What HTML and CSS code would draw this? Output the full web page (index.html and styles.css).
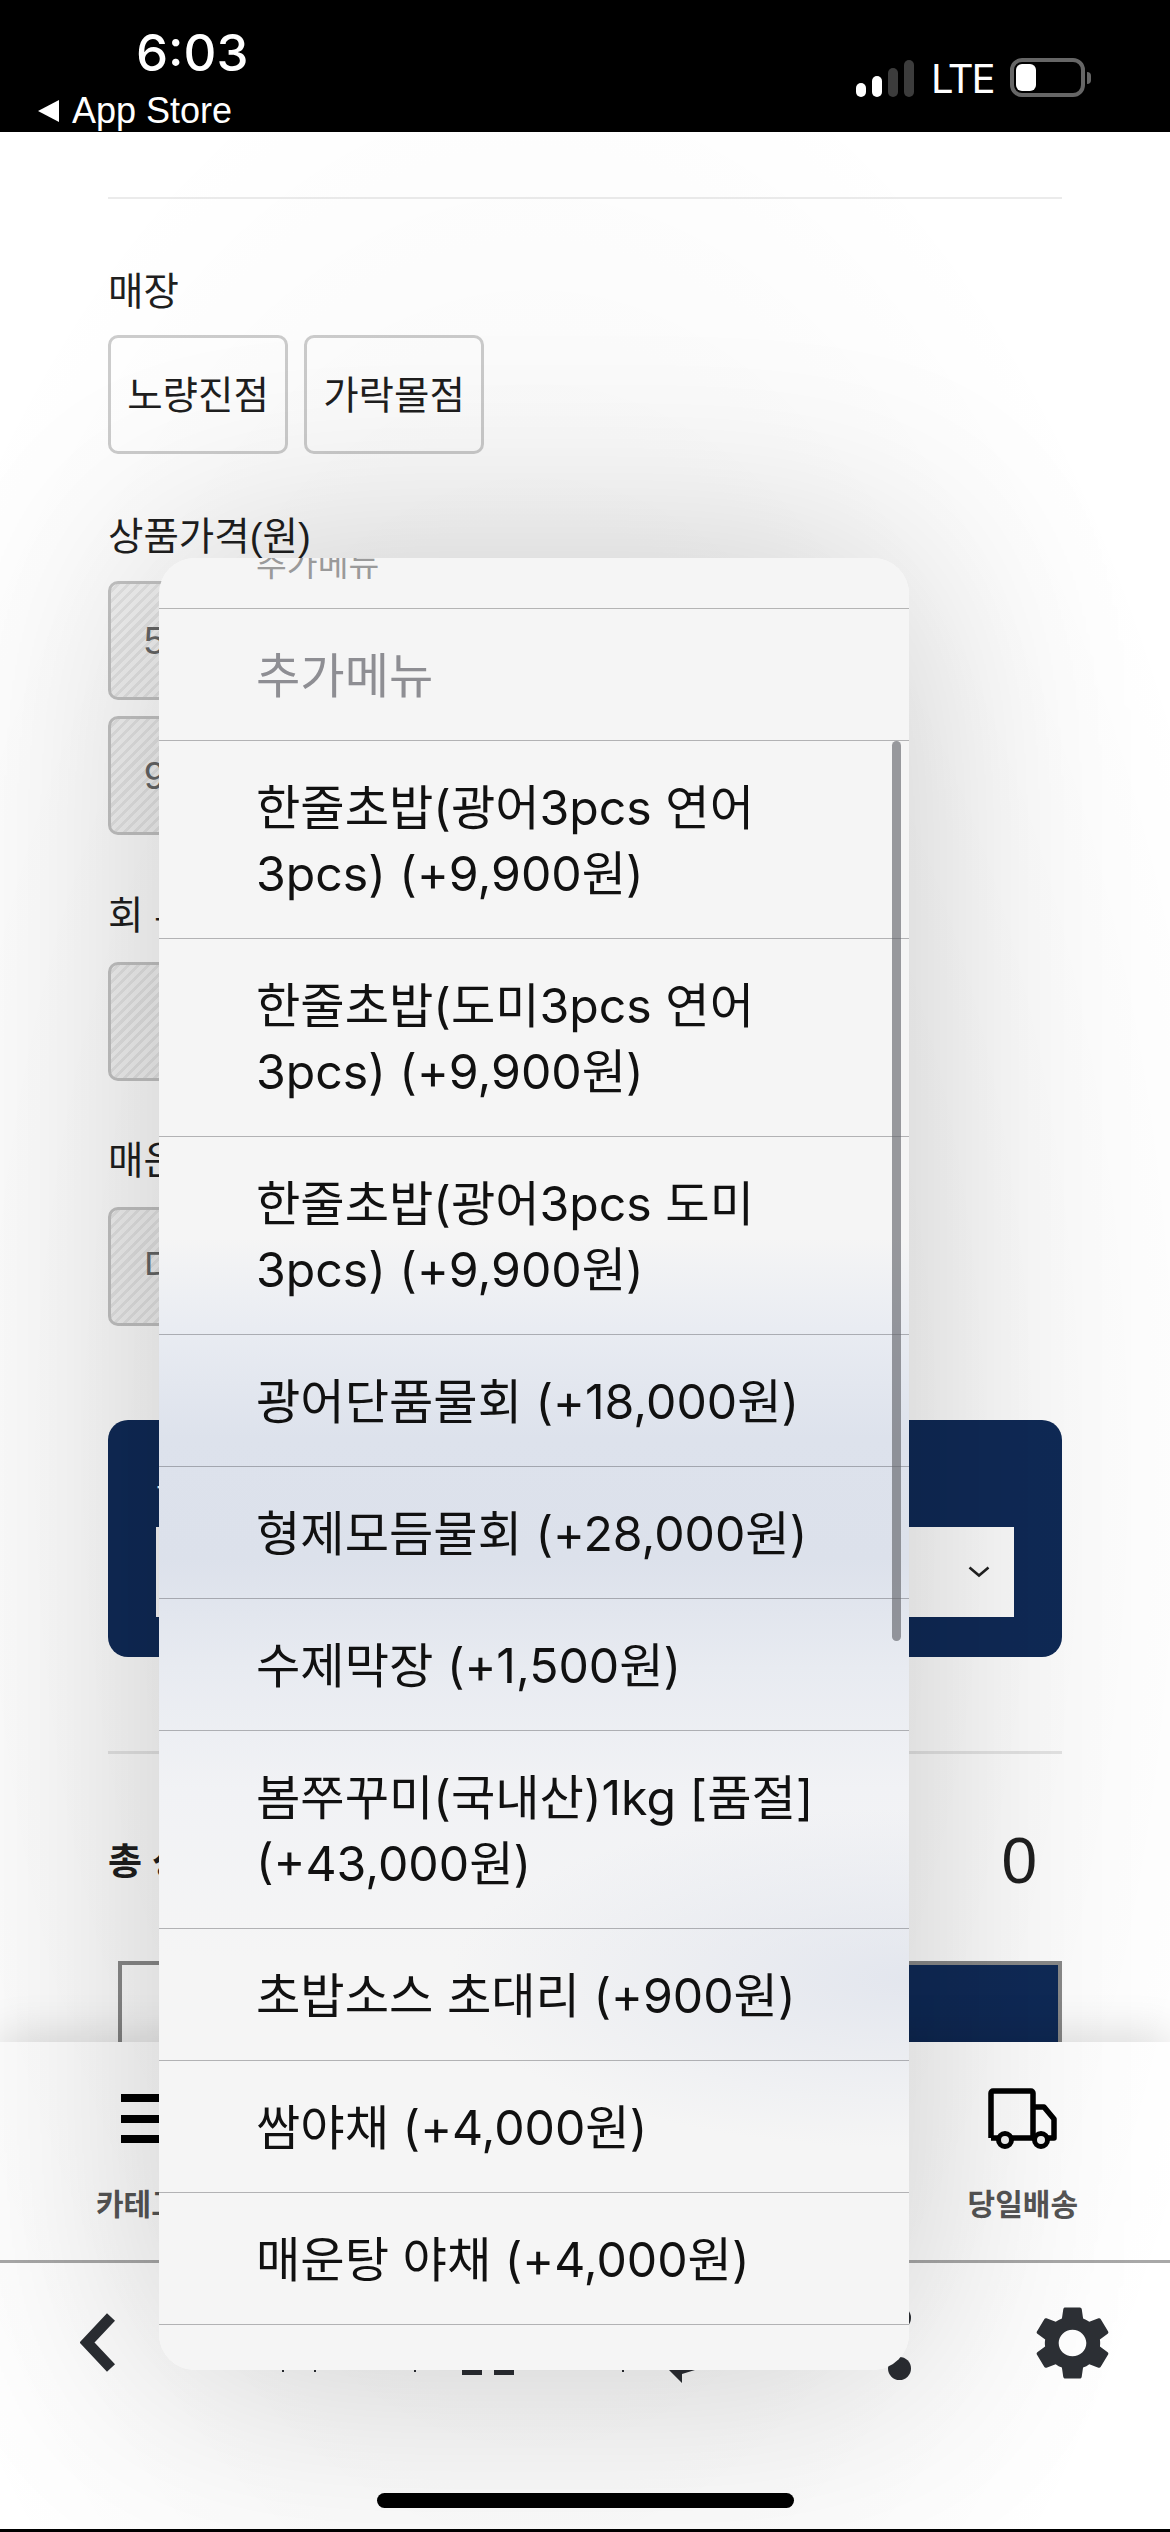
FILE: index.html
```html
<!DOCTYPE html>
<html lang="ko">
<head>
    <meta charset="UTF-8">
    <meta name="viewport" content="width=device-width, initial-scale=1.0">
    <title>상품 옵션</title>
    <link rel="stylesheet" href="styles.css">
</head>
<body>
<div class="screen">
    <!-- 상태바 -->
    <div class="status">
        <div class="status-left">
            <div class="time">6:03</div>
            <div class="back-app"><span class="back-tri"></span>App Store</div>
        </div>
        <div class="status-right">
            <div class="signal">
                <span class="bar b1"></span><span class="bar b2"></span><span class="bar b3"></span><span class="bar b4"></span>
            </div>
            <div class="lte">LTE</div>
            <div class="battery"><span class="battery-fill"></span></div>
            <span class="battery-nub"></span>
        </div>
    </div>

    <!-- 상품 옵션 -->
    <div class="content">
        <div class="rule"></div>
        <div class="label first">매장</div>
        <div class="chips">
            <div class="chip">노량진점</div>
            <div class="chip">가락몰점</div>
        </div>
        <div class="label price">상품가격(원)</div>
        <div class="box box-a">5</div>
        <div class="box box-b">9</div>
        <div class="label cut">회 부위</div>
        <div class="box box-c"></div>
        <div class="label spicy">매운맛</div>
        <div class="box box-c">대</div>
        <div class="card">
            <div class="card-label">추가메뉴</div>
            <div class="select">
                <svg class="chevron" viewBox="0 0 22 12"><path d="M1.5 1.5 11 9.5l9.5-8" fill="none" stroke="#222" stroke-width="2.6"/></svg>
            </div>
        </div>
        <div class="rule rule-total"></div>
        <div class="total">
            <span class="total-label">총 상품금액</span>
            <span class="total-num">0</span>
        </div>
        <div class="actions">
            <div class="btn-line"></div>
            <div class="btn-navy"></div>
        </div>
    </div>

    <!-- 하단 탭 -->
    <div class="tabs">
        <div class="tab">
            <div class="hamburger"><span></span><span></span><span></span></div>
            <div class="tab-name">카테고리</div>
        </div>
        <div class="tab">
            <svg class="truck" viewBox="0 0 70 62">
                <path d="M3 50V5a2 2 0 0 1 2-2h38a2 2 0 0 1 2 2v45M45 19h11l10 12v19h-6M3 50h7M24 50h22" fill="none" stroke="#000" stroke-width="5.5" stroke-linejoin="round"/>
                <circle cx="17" cy="52" r="6.5" fill="#f2f2f2" stroke="#000" stroke-width="5"/>
                <circle cx="53" cy="52" r="6.5" fill="#f2f2f2" stroke="#000" stroke-width="5"/>
            </svg>
            <div class="tab-name">당일배송</div>
        </div>
    </div>

    <!-- 브라우저 툴바 -->
    <div class="nav">
        <svg class="nav-back" viewBox="0 0 36 59"><path d="M31 4 7 29.5 31 55" fill="none" stroke="#2b2e33" stroke-width="11"/></svg>
        <svg class="nav-mid" viewBox="0 0 430 80">
            <rect x="11" y="64" width="2" height="2" fill="#2b2e33"/>
            <rect x="43" y="64" width="2" height="2" fill="#2b2e33"/>
            <rect x="143" y="64" width="2" height="2" fill="#2b2e33"/>
            <rect x="191" y="64" width="20" height="5" fill="#2b2e33"/>
            <rect x="223" y="64" width="20" height="5" fill="#2b2e33"/>
            <rect x="351" y="64" width="2" height="2" fill="#2b2e33"/>
            <path d="M398 64 411 77V68L424 64Z" fill="#2b2e33"/>
        </svg>
        <svg class="nav-more" viewBox="0 0 23 74">
            <circle cx="11.5" cy="12" r="11.5" fill="#2b2e33"/>
            <circle cx="11.5" cy="62.5" r="11.5" fill="#2b2e33"/>
        </svg>
        <svg class="nav-gear" viewBox="2.5 2 19 20" preserveAspectRatio="none"><path fill="#2d3035" d="M19.14 12.94c.04-.3.06-.61.06-.94 0-.32-.02-.64-.07-.94l2.03-1.58a.49.49 0 0 0 .12-.61l-1.92-3.32a.488.488 0 0 0-.59-.22l-2.39.96c-.5-.38-1.03-.7-1.62-.94l-.36-2.54a.484.484 0 0 0-.48-.41h-3.84c-.24 0-.43.17-.47.41l-.36 2.54c-.59.24-1.13.57-1.62.94l-2.39-.96c-.22-.08-.47 0-.59.22L2.74 8.87c-.12.21-.08.47.12.61l2.03 1.58c-.05.3-.09.63-.09.94s.02.64.07.94l-2.03 1.58a.49.49 0 0 0-.12.61l1.92 3.32c.12.22.37.29.59.22l2.39-.96c.5.38 1.03.7 1.62.94l.36 2.54c.05.24.24.41.48.41h3.84c.24 0 .44-.17.47-.41l.36-2.54c.59-.24 1.13-.56 1.62-.94l2.39.96c.22.08.47 0 .59-.22l1.92-3.32c.12-.22.07-.47-.12-.61l-2.01-1.58zM12 15.6c-1.98 0-3.6-1.62-3.6-3.6s1.62-3.6 3.6-3.6 3.6 1.62 3.6 3.6-1.62 3.6-3.6 3.6z"/></svg>
    </div>
    <div class="home-wrap"><div class="home-bar"></div></div>
    <div class="edge"></div>

    <!-- 시트 뒤 어두운 영역 -->
    <div class="shade"></div>

    <!-- 선택 시트 -->
    <div class="sheet">
        <div class="sheet-top"><div class="sheet-title">추가메뉴</div></div>
        <div class="opt muted">추가메뉴</div>
        <div class="opt">한줄초밥(광어3pcs 연어<br>3pcs) (+9,900원)</div>
        <div class="opt">한줄초밥(도미3pcs 연어<br>3pcs) (+9,900원)</div>
        <div class="opt">한줄초밥(광어3pcs 도미<br>3pcs) (+9,900원)</div>
        <div class="opt">광어단품물회 (+18,000원)</div>
        <div class="opt">형제모듬물회 (+28,000원)</div>
        <div class="opt">수제막장 (+1,500원)</div>
        <div class="opt">봄쭈꾸미(국내산)1kg [품절]<br>(+43,000원)</div>
        <div class="opt">초밥소스 초대리 (+900원)</div>
        <div class="opt">쌈야채 (+4,000원)</div>
        <div class="opt">매운탕 야채 (+4,000원)</div>
        <div class="scroll-thumb"></div>
    </div>
</div>
</body>
</html>
```

FILE: styles.css
```css
*{
    box-sizing: border-box;
}
html,body{
    margin: 0;
    padding: 0;
    background-color: #000;
}
.screen{
    position: relative;
    width: 1170px;
    height: 2532px;
    overflow: hidden;
    display: flex;
    flex-direction: column;
    background-color: #fff;
    color: #1f1f1f;
    font-family: "Liberation Sans", "Noto Sans CJK KR", sans-serif;
}

/* 상태바 */
.status{
    height: 132px;
    flex: none;
    display: flex;
    justify-content: space-between;
    background-color: #000;
    color: #fff;
}
.status-left{
    padding-top: 25px;
    padding-left: 38px;
}
.time{
    margin-left: 98px;
    font-family: "Inter", sans-serif;
    font-size: 51px;
    font-weight: 500;
    line-height: 56px;
}
.back-app{
    display: flex;
    align-items: center;
    gap: 13px;
    margin-top: 12px;
    font-size: 36px;
    line-height: 36px;
}
.back-tri{
    width: 0;
    height: 0;
    border-top: 11px solid transparent;
    border-bottom: 11px solid transparent;
    border-right: 21px solid #fff;
}
.status-right{
    display: flex;
    align-items: flex-end;
    padding-right: 79px;
    padding-bottom: 35px;
}
.signal{
    display: flex;
    align-items: flex-end;
    gap: 6px;
}
.bar{
    width: 10px;
    border-radius: 5px;
    background-color: #fff;
}
.b1{ height: 14px; }
.b2{ height: 21px; }
.b3{ height: 29px; background-color: #3c3c3c; }
.b4{ height: 37px; background-color: #3c3c3c; }
.lte{
    width: 60px;
    margin-left: 17px;
    margin-bottom: -4px;
    font-family: "Inter", sans-serif;
    font-size: 40px;
    letter-spacing: -2px;
    line-height: 44px;
}
.battery{
    width: 75px;
    height: 39px;
    margin-left: 19px;
    padding: 2px;
    border: 4px solid #666;
    border-radius: 12px;
}
.battery-fill{
    display: block;
    width: 20px;
    height: 27px;
    border-radius: 6px;
    background-color: #fff;
}
.battery-nub{
    width: 4px;
    height: 12px;
    margin-left: 2px;
    margin-bottom: 13px;
    border-radius: 0 6px 6px 0;
    background-color: #666;
}

/* 상품 옵션 */
.content{
    height: 1910px;
    flex: none;
    overflow: hidden;
    padding: 65px 108px 0;
}
.rule{
    height: 2px;
    background-color: #ebebeb;
}
.label{
    height: 50px;
    font-size: 38.5px;
    line-height: 56px;
    white-space: nowrap;
}
.first{ margin-top: 65px; }
.price{ margin-top: 55px; }
.cut{ margin-top: 53px; }
.spicy{ margin-top: 52px; }
.chips{
    display: flex;
    gap: 16px;
    margin-top: 21px;
}
.chip{
    width: 180px;
    height: 119px;
    border: 3px solid #cdcdcd;
    border-radius: 10px;
    font-size: 38.5px;
    line-height: 115px;
    text-align: center;
}
.box{
    width: 180px;
    height: 119px;
    margin-top: 24px;
    padding-left: 33px;
    border: 3px solid #c4c4c4;
    border-radius: 10px;
    background: repeating-linear-gradient(-45deg, #e5e5e5 0, #e5e5e5 3px, #f3f3f3 3px, #f3f3f3 7px);
    color: #666;
    font-size: 38.5px;
    line-height: 113px;
}
.box-a{ margin-top: 22px; }
.box-b{ margin-top: 16px; }
.card{
    height: 237px;
    margin-top: 94px;
    padding: 44px 48px 40px;
    border-radius: 20px;
    background-color: #0f2a57;
}
.card-label{
    height: 63px;
    color: #fff;
    font-size: 32px;
    line-height: 40px;
}
.select{
    display: flex;
    align-items: center;
    justify-content: flex-end;
    height: 90px;
    padding-right: 24px;
    background-color: #fff;
}
.chevron{
    width: 22px;
    height: 12px;
}
.rule-total{
    height: 3px;
    margin-top: 94px;
    background-color: #e6e6e6;
}
.total{
    display: flex;
    align-items: center;
    justify-content: space-between;
    height: 100px;
    margin-top: 55px;
    padding-right: 25px;
}
.total-label{
    font-size: 37px;
    font-weight: 700;
}
.total-num{
    padding-top: 3px;
    font-size: 64px;
}
.actions{
    display: flex;
    height: 120px;
    margin-top: 52px;
    margin-left: 10px;
}
.btn-line{
    flex: 1;
    border: 4px solid #8a8a8a;
    background-color: #fff;
}
.btn-navy{
    flex: 1;
    border: 4px solid #8a8a8a;
    background-color: #0f2a57;
}

/* 하단 탭 */
.tabs{
    position: relative;
    display: flex;
    justify-content: space-between;
    height: 221px;
    flex: none;
    padding: 46px 92px 0 96px;
    border-bottom: 3px solid #a8a8a8;
    background-color: #fff;
    box-shadow: 0 -8px 40px rgba(0,0,0,.13);
}
.tab{
    display: flex;
    flex-direction: column;
    align-items: center;
}
.hamburger{
    display: flex;
    flex-direction: column;
    justify-content: space-between;
    width: 60px;
    height: 49px;
    margin-top: 6px;
    margin-bottom: 42px;
}
.hamburger span{
    height: 8px;
    background-color: #000;
}
.truck{
    width: 70px;
    height: 62px;
    margin-bottom: 35px;
}
.tab-name{
    color: #555;
    font-size: 30px;
    font-weight: 700;
    line-height: 40px;
    white-space: nowrap;
}

/* 브라우저 툴바 */
.nav{
    position: relative;
    display: flex;
    align-items: flex-start;
    flex: 1;
    padding-top: 43px;
    padding-left: 80px;
    background-color: #fff;
}
.nav-back{
    width: 36px;
    height: 59px;
    margin-top: 7px;
}
.nav-mid{
    width: 430px;
    height: 80px;
    margin-left: 155px;
}
.nav-more{
    width: 23px;
    height: 74px;
    margin-left: 187px;
}
.nav-gear{
    width: 73px;
    height: 74px;
    margin-left: 125px;
}
.home-wrap{
    position: absolute;
    left: 377px;
    top: 2493px;
}
.home-bar{
    width: 417px;
    height: 15px;
    border-radius: 8px;
    background-color: #000;
}
.edge{
    height: 3px;
    flex: none;
    background-color: #000;
}

/* 시트 뒤 그림자 */
.shade{
    position: absolute;
    left: 0;
    right: 0;
    top: 132px;
    bottom: 3px;
    background: radial-gradient(ellipse 760px 1500px at 534px 1330px, rgba(0,0,0,.03) 50%, rgba(0,0,0,0) 100%);
}

/* 선택 시트 */
.sheet{
    position: absolute;
    left: 159px;
    top: 558px;
    width: 750px;
    height: 1812px;
    overflow: hidden;
    border-radius: 36px;
    background:
        radial-gradient(ellipse 460px 170px at 100% 1420px, rgba(212,218,232,.55), rgba(212,218,232,0)),
        linear-gradient(to bottom, #f5f5f5 0, #f5f5f5 680px, #e9ecf2 770px, #dde2ec 880px, #dce1eb 1000px, #e8ebf1 1110px, #f1f2f5 1230px, #f5f5f5 1400px);
    box-shadow: 0 0 230px rgba(0,0,0,.19);
    color: #111;
    font-family: "Inter", "Noto Sans CJK KR", sans-serif;
}
.sheet-top{
    height: 51px;
    overflow: hidden;
    border-bottom: 1px solid #b4b4b4;
}
.sheet-title{
    margin-top: -14px;
    padding-left: 97px;
    color: #9a9a9a;
    font-size: 33.5px;
    line-height: 40px;
}
.opt{
    padding: 34px 40px 31px 97px;
    border-bottom: 1px solid rgba(60,60,67,.36);
    font-size: 48.2px;
    line-height: 66px;
    white-space: nowrap;
}
.muted{
    color: #8e8e93;
}
.scroll-thumb{
    position: absolute;
    right: 8px;
    top: 183px;
    width: 9px;
    height: 900px;
    border-radius: 5px;
    background-color: rgba(100,102,108,.65);
}
```
